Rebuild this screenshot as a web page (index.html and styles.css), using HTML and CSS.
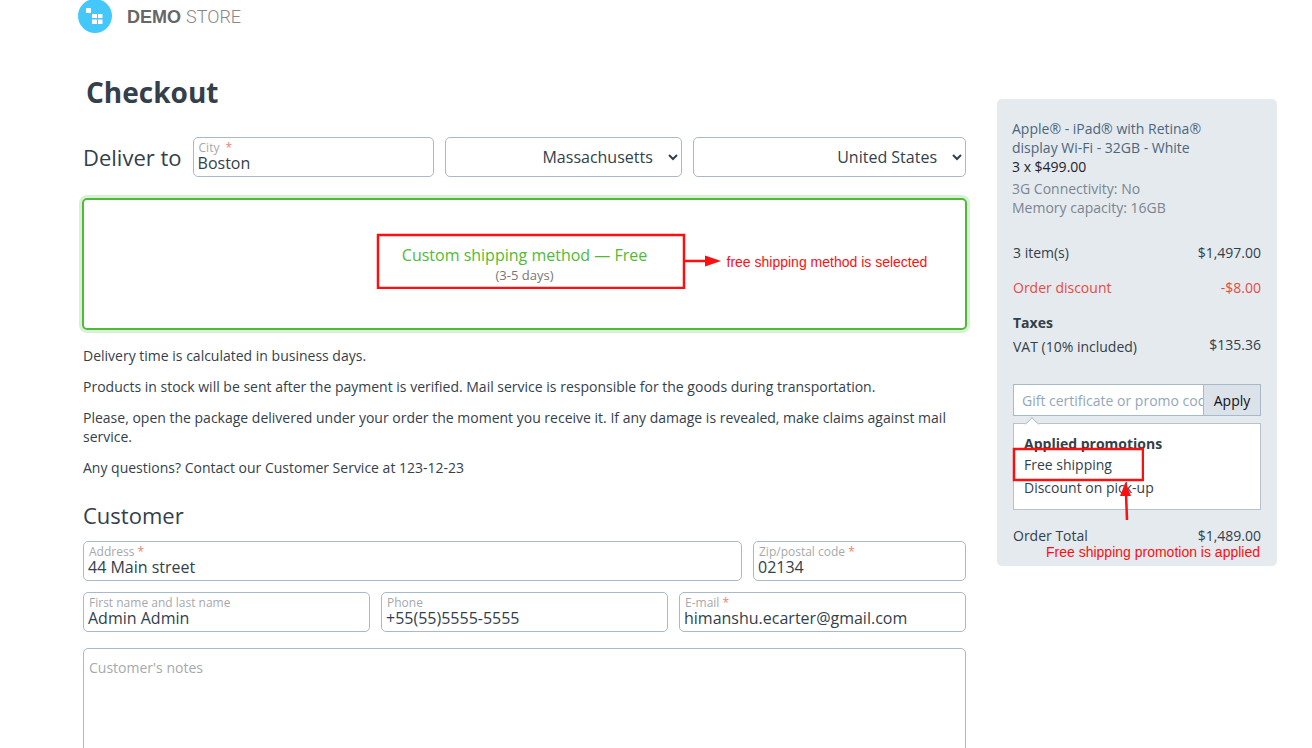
FILE: index.html
```html
<!DOCTYPE html>
<html lang="en">
<head>
  <meta charset="UTF-8" />
  <meta name="viewport" content="width=device-width, initial-scale=1" />
  <title>Checkout - Demo Store</title>
  <link rel="stylesheet" href="styles.css">
</head>
<body>

<header class="site-header">
  <a class="logo" href="#">
    <svg class="logo-mark" viewBox="0 0 34 34" aria-hidden="true">
      <circle cx="17" cy="17" r="17" fill="#44c8fc"/>
      <g fill="#fff">
        <rect x="8" y="9" width="5" height="5"/>
        <rect x="14" y="15" width="5" height="4"/>
        <rect x="20" y="15" width="4.5" height="4"/>
        <rect x="14" y="20.5" width="5" height="4.5"/>
        <rect x="20" y="20.5" width="4.5" height="4.5"/>
      </g>
    </svg>
    <span class="logo-text"><b>DEMO</b> <span class="logo-thin">STORE</span></span>
  </a>
</header>

<div class="page">
  <main class="checkout">
    <h1>Checkout</h1>

    <form class="checkout-form">
      <div class="deliver">
        <h2>Deliver to</h2>
        <div class="field">
          <label for="city">City <span class="req req-wide">*</span></label>
          <input type="text" id="city" value="Boston">
        </div>
        <select aria-label="State">
          <option>Massachusetts</option>
        </select>
        <select aria-label="Country">
          <option>United States</option>
        </select>
      </div>

      <div class="shipping">
        <div class="shipping-method">
          <span class="shipping-name">Custom shipping method — Free</span>
          <span class="shipping-time">(3-5 days)</span>
        </div>
        <div class="callout callout-method">
          <svg viewBox="0 0 346 56" aria-hidden="true">
            <rect x="2" y="2" width="306" height="53" fill="none" stroke="#fd0f0f" stroke-width="2.5"/>
            <path d="M308 28H330" stroke="#fd0f0f" stroke-width="2.5"/>
            <path d="M329 22.5L345 28L329 33.5Z" fill="#fd0f0f"/>
          </svg>
          <span>free shipping method is selected</span>
        </div>
      </div>

      <div class="info">
        <p>Delivery time is calculated in business days.</p>
        <p>Products in stock will be sent after the payment is verified. Mail service is responsible for the goods during transportation.</p>
        <p>Please, open the package delivered under your order the moment you receive it. If any damage is revealed, make claims against mail service.</p>
        <p>Any questions? Contact our Customer Service at 123-12-23</p>
      </div>

      <h2>Customer</h2>
      <div class="row row-address">
        <div class="field">
          <label for="address">Address <span class="req">*</span></label>
          <input type="text" id="address" value="44 Main street">
        </div>
        <div class="field">
          <label for="zip">Zip/postal code <span class="req">*</span></label>
          <input type="text" id="zip" value="02134">
        </div>
      </div>
      <div class="row row-contact">
        <div class="field">
          <label for="name">First name and last name</label>
          <input type="text" id="name" value="Admin Admin">
        </div>
        <div class="field">
          <label for="phone">Phone</label>
          <input type="tel" id="phone" value="+55(55)5555-5555">
        </div>
        <div class="field">
          <label for="email">E-mail <span class="req">*</span></label>
          <input type="email" id="email" value="himanshu.ecarter@gmail.com">
        </div>
      </div>
      <textarea class="notes" placeholder="Customer's notes" aria-label="Customer's notes"></textarea>
    </form>
  </main>

  <aside class="summary">
    <div class="product">
      <a href="#">Apple® - iPad® with Retina® display Wi-Fi - 32GB - White</a>
      <div class="product-price">3 x $499.00</div>
      <div class="product-options">
        <div>3G Connectivity: No</div>
        <div>Memory capacity: 16GB</div>
      </div>
    </div>

    <div class="totals">
      <div class="line"><span>3 item(s)</span><span>$1,497.00</span></div>
      <div class="line discount"><span>Order discount</span><span>-$8.00</span></div>
      <div class="taxes">
        <b>Taxes</b>
        <div class="line"><span class="tax-name">VAT (10% included)</span><span>$135.36</span></div>
      </div>
    </div>

    <form class="promo-form">
      <input type="text" placeholder="Gift certificate or promo code" aria-label="Gift certificate or promo code">
      <button type="button">Apply</button>
    </form>

    <div class="promotions">
      <b>Applied promotions</b>
      <ul>
        <li>Free shipping</li>
        <li>Discount on pick-up</li>
      </ul>
      <svg class="callout callout-promo" viewBox="0 0 132 74" aria-hidden="true">
        <rect x="2" y="2" width="129" height="31" fill="none" stroke="#fd0f0f" stroke-width="2.5"/>
        <path d="M115 73L114 46" stroke="#fd0f0f" stroke-width="2.5"/>
        <path d="M113.5 35L119 49H108Z" fill="#fd0f0f"/>
      </svg>
    </div>

    <div class="line"><span>Order Total</span><span>$1,489.00</span></div>
    <div class="callout callout-applied">Free shipping promotion is applied</div>
  </aside>
</div>

</body>
</html>
```
FILE: styles.css
```css
* {
  box-sizing: border-box;
}

body {
  margin: 0;
  background: #fff;
  color: #333f4b;
  font-family: 'Open Sans', sans-serif;
  font-size: 14px;
  line-height: 19px;
}

input, select, textarea, button {
  font-family: inherit;
  color: inherit;
  margin: 0;
}

.site-header {
  height: 34px;
  padding: 0 35px 0 78px;
}

.logo {
  display: inline-flex;
  align-items: center;
  gap: 15px;
  height: 34px;
  margin-top: -1px;
  text-decoration: none;
}

.logo-mark {
  width: 34px;
  height: 34px;
}

.logo-text {
  padding-top: 2px;
  color: #666;
  font-family: 'Liberation Sans', sans-serif;
  font-size: 18px;
}

.logo-thin {
  color: #888;
  font-family: Roboto, sans-serif;
  font-weight: 300;
}

.page {
  display: flex;
  align-items: flex-start;
  gap: 31px;
  padding: 0 35px 0 83px;
}

.checkout {
  flex: 1;
  min-width: 0;
}

h1 {
  margin: 38px 0 25px 3px;
  font-size: 28px;
  line-height: 40px;
}

h2 {
  margin: 0;
  font-size: 22px;
  font-weight: 400;
  line-height: 30px;
}

.deliver {
  display: grid;
  grid-template-columns: auto 241fr 237fr 273fr;
  align-items: center;
  gap: 11px;
}

.field {
  display: flex;
  flex-direction: column;
  min-width: 0;
  height: 40px;
  padding: 3px 4px 0;
  border: 1px solid #a9b9ca;
  border-radius: 5px;
  background: #fff;
}

.field label {
  padding-left: 1px;
  color: #a6a9ac;
  font-size: 12px;
  line-height: 14px;
}

.field input {
  width: 100%;
  height: 20px;
  margin-top: -2px;
  padding: 0;
  border: 0;
  outline: 0;
  background: none;
  font-size: 16px;
}

.req {
  color: #ee7f6d;
}

.req-wide {
  margin-left: 3px;
}

.deliver select {
  min-width: 0;
  height: 40px;
  padding: 0 12px 0 4px;
  border: 1px solid #a9b9ca;
  border-radius: 5px;
  background: #fff;
  font-size: 16px;
  text-align-last: right;
}

.shipping {
  position: relative;
  display: flex;
  align-items: center;
  justify-content: center;
  height: 132px;
  margin: 21px -1px 16px;
  border: 2px solid #4fbb34;
  border-radius: 5px;
  box-shadow: 0 0 0 3px #d8f0d6;
}

.shipping-method {
  display: flex;
  flex-direction: column;
  align-items: center;
}

.shipping-name {
  color: #4fbb34;
  font-size: 16px;
  line-height: 22px;
}

.shipping-time {
  color: #777;
  font-size: 13px;
  line-height: 18px;
}

/* red notes lie over the page */
.callout {
  position: absolute;
  color: #fd0f0f;
  font-family: 'Liberation Sans', sans-serif;
  pointer-events: none;
}

.callout-method {
  top: 33px;
  left: calc(50% - 149px);
  display: flex;
  align-items: center;
  gap: 5px;
  font-size: 14px;
  white-space: nowrap;
}

.callout-method svg {
  width: 346px;
  height: 56px;
}

.callout-method span {
  padding-top: 2px;
}

.info {
  margin-bottom: 23px;
}

.info p {
  margin: 0 0 12px;
}

.row {
  display: grid;
  gap: 11px;
  margin-top: 11px;
}

.row-address {
  grid-template-columns: 659fr 213fr;
}

.row-contact {
  grid-template-columns: repeat(3, 1fr);
}

.notes {
  display: block;
  width: 100%;
  height: 120px;
  margin-top: 16px;
  padding: 9px 5px;
  border: 1px solid #a9b9ca;
  border-radius: 5px;
  font-size: 14px;
  line-height: 19px;
  resize: none;
}

.notes::placeholder {
  color: #a6a9ac;
}

.summary {
  position: relative;
  width: 280px;
  margin-top: 65px;
  padding: 20px 16px 21px;
  border-radius: 5px;
  background: #e5eaee;
}

.product {
  margin: 0 40px 26px -1px;
}

.product a {
  color: #4d667f;
  text-decoration: none;
}

.product-price {
  color: #1d1f2b;
}

.product-options {
  margin-top: 3px;
  color: #7b8592;
}

.line {
  display: flex;
  justify-content: space-between;
}

.totals {
  display: flex;
  flex-direction: column;
  gap: 16px;
}

.discount {
  color: #e54b44;
}

.taxes .line {
  margin-top: 3px;
}

.tax-name {
  padding-top: 2px;
}

.promo-form {
  display: flex;
  height: 32px;
  margin: 28px 0 7px;
  border: 1px solid #a9b9ca;
  background: #fff;
}

.promo-form input {
  flex: 1;
  min-width: 0;
  padding: 0 0 0 8px;
  border: 0;
  background: none;
  font-size: 14px;
}

.promo-form input::placeholder {
  color: #93a7bb;
}

.promo-form button {
  width: 57px;
  padding: 0;
  border: 0;
  border-left: 1px solid #a9b9ca;
  background: #dce2ea;
  color: #111;
  font-size: 14px;
}

.promotions {
  position: relative;
  height: 87px;
  margin-bottom: 16px;
  padding: 10px;
  border: 1px solid #b8c1c9;
  background: #fff;
}

.promotions::before {
  content: '';
  position: absolute;
  top: -5px;
  left: 13px;
  width: 9px;
  height: 9px;
  border: 1px solid #b8c1c9;
  border-right: 0;
  border-bottom: 0;
  background: #fff;
  transform: rotate(45deg);
}

.promotions ul {
  margin: 2px 0 0;
  padding: 0;
  list-style: none;
}

.promotions li {
  margin-bottom: 4px;
}

.callout-promo {
  top: 23px;
  left: -2px;
  width: 132px;
  height: 74px;
}

.callout-applied {
  right: 17px;
  bottom: 4px;
  font-size: 14px;
}
```
